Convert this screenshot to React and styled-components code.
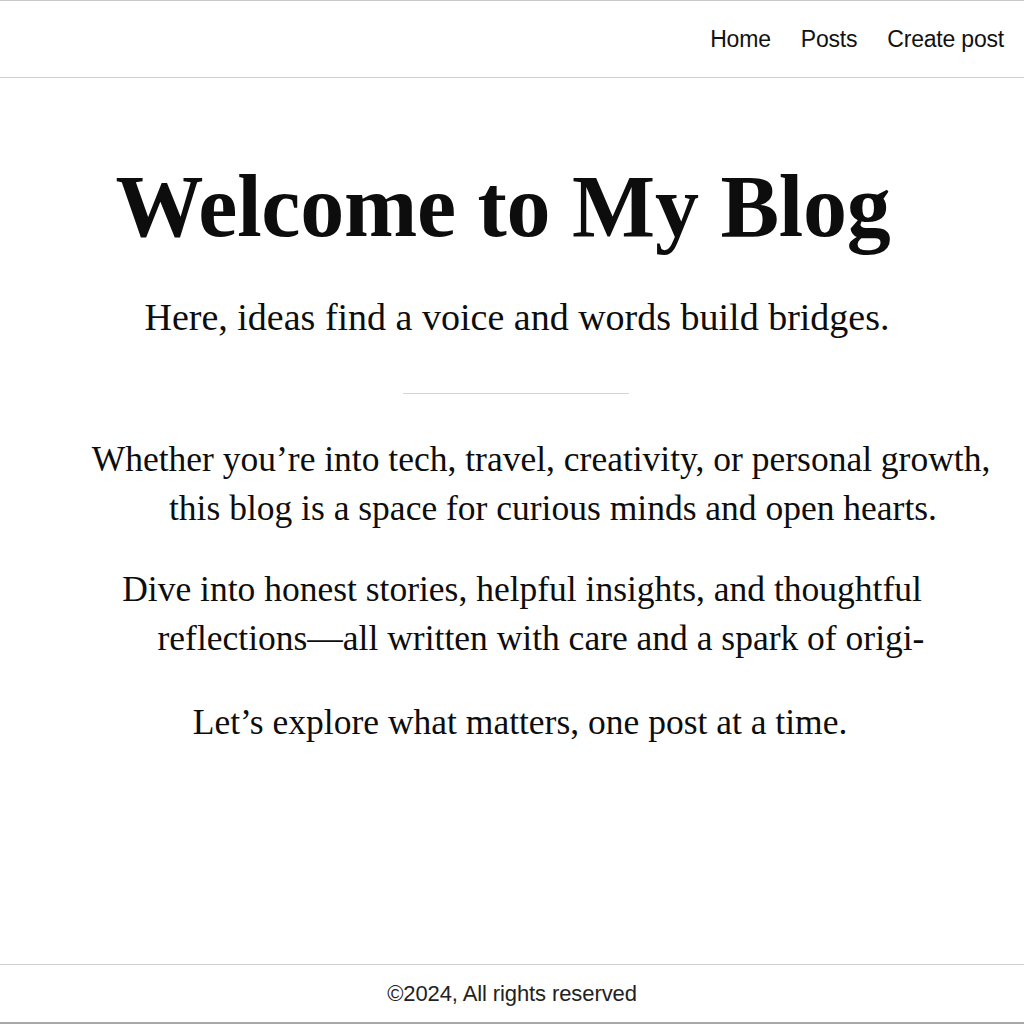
import React from 'react'
import styled, { createGlobalStyle } from 'styled-components'

const GlobalStyle = createGlobalStyle`
  html, body {
    margin: 0;
    padding: 0;
    background: #fff;
  }
  * {
    box-sizing: border-box;
  }
`

const Page = styled.div`
  min-height: 100vh;
  display: flex;
  flex-direction: column;
  color: #0d0d0d;
`

const Header = styled.header`
  height: 78px;
  border-top: 1px solid #c8c8c8;
  border-bottom: 1px solid #d0d0d0;
  display: flex;
  justify-content: flex-end;
  align-items: center;
  padding: 0 20px 0 0;
`

const Nav = styled.nav`
  display: flex;
  gap: 30px;
`

const NavLink = styled.a`
  font-family: 'Liberation Sans', Arial, sans-serif;
  font-size: 23px;
  color: #111;
  text-decoration: none;
  letter-spacing: -0.2px;
`

const Main = styled.main`
  flex: 1;
  display: flex;
  flex-direction: column;
  align-items: center;
  padding-top: 81px;
  font-family: 'Liberation Serif', 'Times New Roman', serif;
  text-align: center;
`

const Title = styled.h1`
  margin: 0 0 0 -18px;
  font-size: 88px;
  font-weight: 700;
  letter-spacing: -0.25px;
  line-height: 1.1;
`

const Subtitle = styled.p`
  margin: 39px 0 0 10px;
  font-size: 38px;
  line-height: 1.2;
`

const Divider = styled.hr`
  width: 226px;
  border: none;
  border-top: 1px solid #d4d4d4;
  margin: 53px 0 0 8px;
`

const Paragraph = styled.p`
  margin: ${p => p.$top}px 0 0;
  font-size: 35.5px;
  line-height: 49px;
`

const Line = styled.span`
  display: block;
  padding-left: ${p => (p.$shift || 0) * 2}px;
`

export default function App() {
  return (
    <>
      <GlobalStyle />
      <Page>
        <Header>
          <Nav>
            <NavLink href="#">Home</NavLink>
            <NavLink href="#">Posts</NavLink>
            <NavLink href="#">Create post</NavLink>
          </Nav>
        </Header>
        <Main>
          <Title>Welcome to My Blog</Title>
          <Subtitle>Here, ideas find a voice and words build bridges.</Subtitle>
          <Divider />
          <Paragraph $top={41}>
            <Line $shift={29}>Whether you’re into tech, travel, creativity, or personal growth,</Line>
            <Line $shift={41}>this blog is a space for curious minds and open hearts.</Line>
          </Paragraph>
          <Paragraph $top={32}>
            <Line $shift={10}>Dive into honest stories, helpful insights, and thoughtful</Line>
            <Line $shift={29}>reflections—all written with care and a spark of origi-</Line>
          </Paragraph>
          <Paragraph $top={35}>
            <Line $shift={8}>Let’s explore what matters, one post at a time.</Line>
          </Paragraph>
        </Main>
        <Footer>©2024, All rights reserved</Footer>
      </Page>
    </>
  )
}

const Footer = styled.footer`
  height: 60px;
  border-top: 1px solid #cfcfcf;
  border-bottom: 2px solid #a8a8a8;
  display: flex;
  justify-content: center;
  align-items: center;
  font-family: 'Liberation Sans', Arial, sans-serif;
  font-size: 22px;
  color: #222;
  letter-spacing: -0.1px;
`
